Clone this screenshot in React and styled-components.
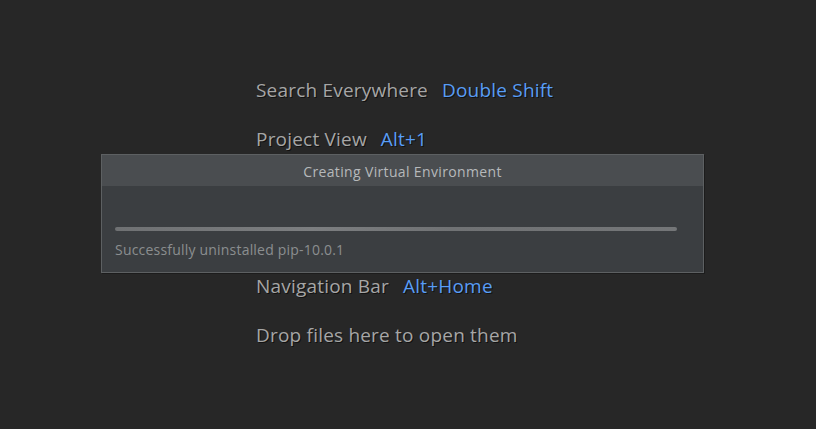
import React from 'react';
import styled, { createGlobalStyle } from 'styled-components';

const GlobalStyle = createGlobalStyle`
    html, body {
        margin: 0;
        padding: 0;
        background: #272727;
    }
`;

const Screen = styled.div`
    position: relative;
    width: 816px;
    height: 429px;
    background: #272727;
    overflow: hidden;
    font-family: 'Open Sans', 'Noto Sans', sans-serif;
`;

const HintList = styled.div`
    display: flex;
    flex-direction: column;
    gap: 23px;
    padding: 77px 0 0 256px;
`;

const HintRow = styled.div`
    display: flex;
    align-items: center;
    gap: 14px;
    height: 26px;
    font-size: 19px;
    letter-spacing: 0.2px;
    text-shadow: 1px 1px 0 #111;
    white-space: nowrap;
`;

const HintLabel = styled.span`
    color: #a6a6a6;
`;

const HintKey = styled.span`
    color: #589df6;
`;

const Dialog = styled.div`
    position: absolute;
    left: 101px;
    top: 154px;
    width: 601px;
    height: 117px;
    display: flex;
    flex-direction: column;
    background: #3b3e41;
    border: 1px solid #5d6062;
    box-shadow: 1px 1px 0 #1c1c1c;
`;

const TitleBar = styled.div`
    height: 30px;
    display: flex;
    align-items: center;
    justify-content: center;
    background: #4a4d50;
    color: #b6b9bb;
    font-size: 14px;
    letter-spacing: 0.35px;
    padding-top: 1px;
`;

const Body = styled.div`
    flex: 1;
    display: flex;
    flex-direction: column;
    padding: 41px 26px 0 13px;
`;

const Track = styled.div`
    height: 4px;
    border-radius: 2px;
    background: linear-gradient(90deg, #6f7173 0%, #7c7e80 35%, #707274 60%, #747678 100%);
`;

const Status = styled.div`
    margin-top: 9px;
    color: #8b8e90;
    font-size: 14px;
    letter-spacing: 0.2px;
`;

const hints = [
    { label: 'Search Everywhere', key: 'Double Shift' },
    { label: 'Project View', key: 'Alt+1' },
    { label: 'Go to File', key: 'Ctrl+Shift+N' },
    { label: 'Recent Files', key: 'Ctrl+E' },
    { label: 'Navigation Bar', key: 'Alt+Home' },
    { label: 'Drop files here to open them' },
];

const App = () => (
    <Screen>
        <GlobalStyle />
        <HintList>
            {hints.map((h) => (
                <HintRow key={h.label}>
                    <HintLabel>{h.label}</HintLabel>
                    {h.key && <HintKey>{h.key}</HintKey>}
                </HintRow>
            ))}
        </HintList>
        <Dialog>
            <TitleBar>Creating Virtual Environment</TitleBar>
            <Body>
                <Track />
                <Status>Successfully uninstalled pip-10.0.1</Status>
            </Body>
        </Dialog>
    </Screen>
);

export default App;
